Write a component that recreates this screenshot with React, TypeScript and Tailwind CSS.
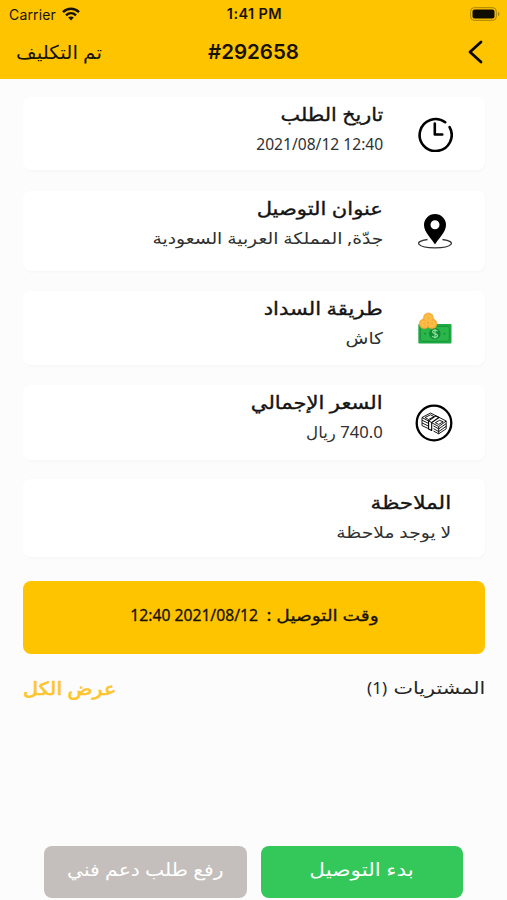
import React from 'react';

interface InfoCardProps {
  title: string;
  value: string;
  icon?: React.ReactNode;
  className: string;
  titleScale?: string;
  valueScale?: string;
  ltr?: boolean;
}

const WifiIcon = () => (
  <svg className="w-[18px] h-[14px]" viewBox="0 0 18 14" fill="none" stroke="#171300" strokeWidth="2.5">
    <path d="M1 5.1C5.6.7 12.4.7 17 5.1" />
    <path d="M4 8.3c2.9-2.7 7.1-2.7 10 0" />
    <path d="M6.2 10.6c1.6-1.5 4-1.5 5.6 0L9 13.5z" fill="#171300" stroke="none" />
  </svg>
);

const BatteryIcon = () => (
  <svg className="w-[30px] h-[14px]" viewBox="0 0 30 14">
    <rect x=".7" y=".7" width="25.6" height="12.6" rx="3.5" fill="none" stroke="#a78300" />
    <rect x="2.5" y="2.5" width="22" height="9" rx="2" fill="#100d00" />
    <path d="M28 4.8c2 .8 2 3.6 0 4.4z" fill="#a78300" />
  </svg>
);

const ClockIcon = () => (
  <svg className="w-9 h-9" viewBox="0 0 36 36" fill="none" stroke="#000" strokeWidth="2.6" strokeLinecap="round" strokeLinejoin="round">
    <path d="M28.2 6.2A16 16 0 1 0 32.6 11.2" />
    <path d="M17.8 7.500v11h7.500" />
  </svg>
);

const PinIcon = () => (
  <svg className="w-9 h-9" viewBox="0 0 36 36">
    <path d="M10.5 26.5C-4.5 28.5.5 34.8 18 34.8s22.5-6.3 7.5-8.3" fill="none" stroke="#333" strokeWidth="1.3" />
    <path
      d="M18 31.5C15.2 26 7 19.5 7 12a11 11 0 0 1 22 0c0 7.500-8.200 14-11 19.500zM18 7.300a4.500 4.500 0 1 0 0 9 4.500 4.500 0 0 0 0-9z"
      fill="#000"
      fillRule="evenodd"
    />
  </svg>
);

const CashIcon = () => (
  <svg className="mt-0.5 w-9 h-9" viewBox="0 0 36 36">
    <rect x="1.300" y="13" width="33.200" height="19.500" rx="1" fill="#20a842" />
    <path d="M5.500 15.500h24.800l2 2v10.800l-2 2H5.500l-2-2V17.500z" fill="#2bb64c" stroke="#168f37" strokeWidth=".8" />
    <circle cx="17.800" cy="22.700" r="5.800" fill="#148d3b" />
    <path d="M20.500 20.300c-1-1.800-5-1.600-5 .5 0 2.300 5 1.400 5 3.800 0 2.200-4.200 2.300-5.300.4M18 18.100v9.400" fill="none" stroke="#8adf94" strokeWidth="1.200" />
    <circle cx="8" cy="22.700" r="1" fill="#168f37" />
    <circle cx="27.500" cy="22.700" r="1" fill="#168f37" />
    <g fill="#fbb53a" stroke="#f39b2d" strokeWidth=".5">
      <circle cx="7.300" cy="12.800" r="5" />
      <circle cx="15" cy="12.800" r="5" />
      <circle cx="11.400" cy="6.900" r="5" />
    </g>
    <g fill="none" stroke="#ffc75c" strokeWidth=".9">
      <circle cx="7.300" cy="12.800" r="2.500" />
      <circle cx="15" cy="12.800" r="2.500" />
      <circle cx="11.400" cy="6.900" r="2.600" />
    </g>
  </svg>
);

const BanknotesIcon = () => (
  <svg className="mr-0.5 w-[38px] h-[38px]" viewBox="0 0 38 38" fill="none" stroke="#000" strokeLinejoin="round">
    <circle cx="19" cy="19" r="17.300" strokeWidth="2.300" />
    <g strokeWidth=".9">
      <path d="M7 13.500 15.500 9l15.700 8-7.500 5.500z" fill="#fff" />
      <path d="m10 13.500 5.500-2.700 3.500 1.800-5.500 2.900zM20.300 18.700l4.200-2.400 3.700 1.500-4.500 2.600z" />
      <path d="M7 13.500v2.700l8.500 4.200m3 1.500 5.200 3 7.500-5.300V17" />
      <path d="M7 16.200v2.700l8.500 4.200m3 1.500 5.200 3 7.500-5.300v-2.700" />
      <path d="M7 18.900v2.700l8.500 4m3 1.500 5.200 2.700 7.500-5v-2.900" />
      <path d="M23.700 22.500v7.300" />
      <path d="m13.600 16.900 7.200-5 3.200 1.600-7.300 5v8l-3.100-1.600z" fill="#fff" strokeWidth="1.100" />
      <path d="m13.600 16.900 3.100 1.600" />
    </g>
  </svg>
);

const InfoCard: React.FC<InfoCardProps> = ({
  title,
  value,
  icon,
  className,
  titleScale = 'scale-x-[1.17]',
  valueScale = 'scale-x-[1.17]',
  ltr = false,
}) => (
  <section className={`flex shrink-0 rounded-lg bg-white shadow-[1px_2px_2px_rgba(0,0,0,0.02)] ${className}`}>
    {icon && <div className="flex w-[102px] shrink-0 items-center justify-center pl-0.5">{icon}</div>}
    <div className={icon ? '' : 'pr-[34px] pt-1.5'}>
      <h2 className={`h-9 w-fit origin-right whitespace-nowrap text-[18px] leading-[34px] text-[#141414] [-webkit-text-stroke:0.35px_#141414] ${titleScale}`}>
        {title}
      </h2>
      <p dir={ltr ? 'ltr' : 'rtl'} className={`h-[22px] w-fit origin-right whitespace-nowrap text-[16px] leading-[22px] text-[#303030] ${valueScale}`}>
        {value}
      </p>
    </div>
  </section>
);

const Header = () => (
  <header className="h-[79px] shrink-0 bg-[#ffc400] text-[#171300]">
    <div dir="ltr" className="grid h-7 grid-cols-3 items-center pl-[9px] pr-[7px] font-[Inter,sans-serif]">
      <div className="flex items-center gap-1.5 text-[14px] tracking-[0.15px]">
        Carrier <WifiIcon />
      </div>
      <span className="text-center text-[14.500px] font-semibold tracking-[0.4px]">1:41 PM</span>
      <div className="flex justify-end">
        <BatteryIcon />
      </div>
    </div>
    <div dir="ltr" className="grid h-12 grid-cols-3 items-center pl-4 pr-6">
      <span dir="rtl" className="origin-left scale-x-[1.05] justify-self-start whitespace-nowrap text-[19px]">تم التكليف</span>
      <h1 className="pl-2 text-center font-[Inter,sans-serif] text-[20.500px] font-semibold">#292658</h1>
      <button type="button" aria-label="رجوع" className="justify-self-end">
        <svg className="w-[15px] h-6" viewBox="0 0 15 24" fill="none" stroke="#0d0a00" strokeWidth="2.800" strokeLinecap="round" strokeLinejoin="round">
          <path d="M13 2 2 12l11 10" />
        </svg>
      </button>
    </div>
  </header>
);

const App = () => (
  <div dir="rtl" className="flex h-[900px] w-[507px] flex-col overflow-hidden bg-[#fcfcfc] font-['Noto_Sans','DejaVu_Sans',sans-serif]">
    <Header />
    <main className="flex flex-1 flex-col pl-[23px] pr-[22px] pt-[18px]">
      <InfoCard
        className="h-[73px] mb-[21px]"
        title="تاريخ الطلب"
        value="2021/08/12 12:40"
        icon={<ClockIcon />}
        titleScale="scale-x-[1.15]"
        valueScale="scale-x-[0.975]"
        ltr
      />
      <InfoCard className="h-[80px] mb-5" title="عنوان التوصيل" value="جدّة, المملكة العربية السعودية" icon={<PinIcon />} />
      <InfoCard className="h-[74px] mb-5" title="طريقة السداد" value="كاش" icon={<CashIcon />} />
      <InfoCard className="h-[75px] mb-[19px]" title="السعر الإجمالي" value="740.0 ريال" icon={<BanknotesIcon />} valueScale="scale-x-[1.04]" />
      <InfoCard className="h-[78px] mb-6" title="الملاحظة" value="لا يوجد ملاحظة" titleScale="scale-x-[1.2]" />
      <div className="flex h-[73px] shrink-0 items-center justify-center gap-2 whitespace-nowrap rounded-lg bg-[#ffc400] pb-1.5 text-[16px] text-[#171300] [-webkit-text-stroke:0.3px_#171300]">
        <span className="w-[112px]">
          <span className="inline-block origin-right scale-x-[1.16]">وقت التوصيل :</span>
        </span>
        <span className="scale-x-[0.98]">2021/08/12 12:40</span>
      </div>
      <div className="mt-[18px] flex h-8 items-center justify-between text-[17px] text-[#252525]">
        <div className="flex">
          <span className="w-[98px]">
            <span className="inline-block origin-right scale-x-[1.22]">المشتريات</span>
          </span>
          <span>(1)</span>
        </div>
        <button type="button" className="origin-left scale-x-[1.15] text-[18px] text-[#ffc52c] [-webkit-text-stroke:0.7px_#ffc52c]">
          عرض الكل
        </button>
      </div>
    </main>
    <footer className="mb-0.5 flex h-[52px] shrink-0 justify-center gap-3.5 whitespace-nowrap text-[18px] text-white">
      <button type="button" className="w-[202px] rounded-lg bg-[#34c759] pb-1.5">
        <span className="inline-block scale-x-[1.2]">بدء التوصيل</span>
      </button>
      <button type="button" className="w-[203px] rounded-lg bg-[#c4bfbc] pb-1.5">
        <span className="inline-block scale-x-[1.13]">رفع طلب دعم فني</span>
      </button>
    </footer>
  </div>
);

export default App;
